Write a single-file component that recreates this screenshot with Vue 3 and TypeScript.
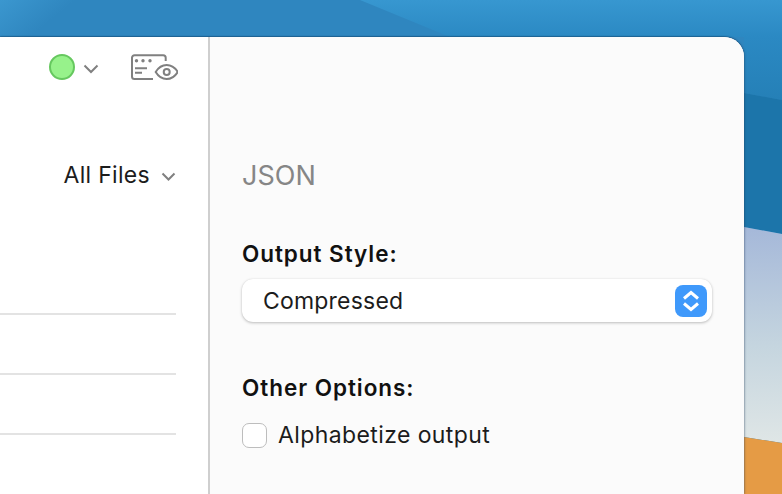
<script setup lang="ts">
const rows: number[] = [1, 2, 3];
</script>

<template>
  <div class="desktop">
    <svg class="wallpaper" width="782" height="494" viewBox="0 0 782 494" aria-hidden="true">
      <defs>
        <linearGradient id="sky" x1="0" y1="0" x2="0" y2="1">
          <stop offset="0" stop-color="#a5b8d9" />
          <stop offset="0.55" stop-color="#c5d5df" />
          <stop offset="1" stop-color="#dfe6e6" />
        </linearGradient>
        <linearGradient id="left" gradientUnits="userSpaceOnUse" x1="0" y1="0" x2="30" y2="37">
          <stop offset="0" stop-color="#3b97cf" />
          <stop offset="1" stop-color="#2f86bf" />
        </linearGradient>
        <linearGradient id="wedge" gradientUnits="userSpaceOnUse" x1="0" y1="0" x2="0" y2="100">
          <stop offset="0" stop-color="#3797d0" />
          <stop offset="0.37" stop-color="#2b89c3" />
          <stop offset="1" stop-color="#2580b7" />
        </linearGradient>
      </defs>
      <rect width="782" height="494" fill="url(#left)" />
      <polygon points="360,0 782,0 782,100 744,93 744,37 450,37" fill="url(#wedge)" />
      <polygon points="744,93 782,100 782,234 744,227" fill="#1c75aa" />
      <polygon points="744,227 782,234 782,443 744,437" fill="url(#sky)" />
      <polygon points="744,437 782,443 782,494 744,494" fill="#e59b45" />
    </svg>
    <main class="window">
      <section class="list-pane">
        <div class="toolbar">
          <span class="status-dot"></span>
          <svg class="chevron status-chevron" width="16" height="10" viewBox="0 0 16 10">
            <path d="M1.500 1.500 8 8 14.500 1.500" />
          </svg>
          <svg class="view-icon" width="48" height="28" viewBox="0 0 48 28">
            <path class="ic" d="M23 25H4.500a2.500 2.500 0 0 1-2.500-2.500V3.800a2.500 2.500 0 0 1 2.500-2.500h28.700a2.500 2.500 0 0 1 2.500 2.500v3.200" />
            <circle class="dot" cx="6.500" cy="6.700" r="1.700" />
            <circle class="dot" cx="13" cy="6.700" r="1.700" />
            <circle class="dot" cx="20" cy="6.700" r="1.700" />
            <path class="ic" d="M5 14.300h12M5 18.700h7" />
            <path class="ic" d="M25.700 18c3-5 7-7 11-7s8 2 11 7c-3 5-7 7-11 7s-8-2-11-7z" />
            <circle class="ic" cx="36.700" cy="18" r="3" />
          </svg>
        </div>
        <div class="filter">
          <span class="filter-label">All Files</span>
          <svg class="chevron filter-chevron" width="15" height="9" viewBox="0 0 15 9">
            <path d="M1.500 1.500 7.500 7.500 13.500 1.500" />
          </svg>
        </div>
        <div class="rows">
          <div v-for="row in rows" :key="row" class="row"></div>
        </div>
      </section>
      <aside class="options">
        <h2 class="title">JSON</h2>
        <h3 class="heading">Output Style:</h3>
        <div class="select">
          <span>Compressed</span>
          <span class="stepper">
            <svg width="20" height="24" viewBox="0 0 20 24">
              <path d="M3 9.500 10 3.500 17 9.500M3 14.500 10 20.500 17 14.500" />
            </svg>
          </span>
        </div>
        <h3 class="heading other">Other Options:</h3>
        <label class="check">
          <span class="box"></span>
          <span>Alphabetize output</span>
        </label>
      </aside>
    </main>
  </div>
</template>

<style scoped>
.desktop {
  position: relative;
  width: 782px;
  height: 494px;
  overflow: hidden;
  padding-top: 37px;
  box-sizing: border-box;
  font-family: Inter, "Liberation Sans", sans-serif;
  color: #1c1c1c;
}
.wallpaper {
  position: absolute;
  inset: 0;
}
.window {
  position: relative;
  display: flex;
  width: 744px;
  height: 457px;
  background: #fff;
  border-top-right-radius: 20px;
  box-shadow: 0 -1px 1px rgba(10, 60, 100, 0.45), 1px 0 2px rgba(40, 60, 90, 0.35);
  overflow: hidden;
}
.list-pane {
  flex: 0 0 208px;
  box-sizing: border-box;
  background: #fff;
}
.toolbar {
  display: flex;
  align-items: center;
  height: 26px;
  margin-top: 17px;
  padding-left: 49px;
}
.status-dot {
  width: 26px;
  height: 26px;
  box-sizing: border-box;
  border-radius: 50%;
  background: #97f28b;
  border: 2px solid #66c85f;
}
.status-chevron {
  margin-left: 8px;
  margin-top: 3px;
}
.view-icon {
  margin-left: 31px;
  margin-top: 1px;
}
.ic {
  fill: none;
  stroke: #808080;
  stroke-width: 2;
}
.dot {
  fill: #808080;
}
.chevron path {
  fill: none;
  stroke: #808080;
  stroke-width: 2;
}
.filter {
  display: flex;
  align-items: center;
  justify-content: flex-end;
  gap: 11px;
  width: 176px;
  margin-top: 80px;
  height: 30px;
}
.filter-chevron {
  margin-top: 3px;
}
.filter-label {
  font-size: 23px;
  line-height: 30px;
  letter-spacing: 0.3px;
}
.rows {
  margin-top: 123px;
  width: 176px;
}
.row {
  height: 60px;
  box-sizing: border-box;
  border-top: 2px solid #e3e3e3;
}
.options {
  flex: 1;
  box-sizing: border-box;
  background: #fbfbfb;
  border-left: 2px solid #cfcfcf;
  padding: 0 32px;
}
.title {
  margin: 123px 0 0;
  font-size: 27px;
  line-height: 32px;
  font-weight: 400;
  color: #868686;
}
.heading {
  margin: 48px 0 0;
  font-size: 22.500px;
  line-height: 28px;
  font-weight: 600;
  letter-spacing: 0.95px;
  color: #111;
}
.select {
  display: flex;
  align-items: center;
  justify-content: space-between;
  height: 43px;
  margin-top: 11px;
  padding: 0 5px 0 21px;
  background: #fff;
  border-radius: 11px;
  box-shadow: 0 1px 3px rgba(0, 0, 0, 0.25), 0 0 1px rgba(0, 0, 0, 0.1);
  font-size: 23px;
  letter-spacing: 0.2px;
}
.stepper {
  display: flex;
  align-items: center;
  justify-content: center;
  width: 32px;
  height: 32px;
  border-radius: 8px;
  background: #3f99fb;
}
.stepper path {
  fill: none;
  stroke: #fff;
  stroke-width: 3;
}
.other {
  margin-top: 52px;
}
.check {
  display: flex;
  align-items: center;
  gap: 11px;
  margin-top: 19px;
  font-size: 23px;
  line-height: 28px;
  letter-spacing: 0.4px;
}
.box {
  width: 25px;
  height: 25px;
  box-sizing: border-box;
  background: #fff;
  border: 1px solid #bdbdbd;
  border-radius: 7px;
}
</style>
